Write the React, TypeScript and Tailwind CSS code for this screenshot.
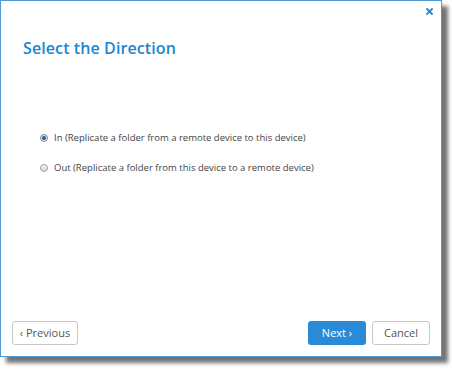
export default function App() {
  return (
    <div className="w-[452px] h-[374px] bg-white font-['Open_Sans',sans-serif]">
      <div className="w-[442px] h-[357px] border border-[#4e98d6] bg-white shadow-[6px_6px_4px_rgba(0,0,0,0.55)] flex flex-col">
        <div className="flex justify-end pt-[7px] pr-[8px] h-[18px]">
          <svg width="7" height="7" viewBox="0 0 7 7">
            <path d="M1 1L6 6M6 1L1 6" stroke="#1e88d2" strokeWidth="1.8" strokeLinecap="square" />
          </svg>
        </div>
        <h1 className="mt-[18px] pl-[22px] text-[16px] leading-[22px] font-semibold tracking-[0.1px] text-[#1b86cf]">Select the Direction</h1>

        <div className="mt-[72px] pl-[39px] flex flex-col gap-[16px] text-[9.5px] leading-[14px] text-[#444]">
          <label className="flex items-center gap-[6px]">
            <span className="w-[8px] h-[8px] rounded-full border border-[#8a8a8a] bg-[#e6e6e6] flex items-center justify-center">
              <span className="w-[4px] h-[4px] rounded-full bg-[#1a5fa8]" />
            </span>
            In (Replicate a folder from a remote device to this device)
          </label>
          <label className="flex items-center gap-[6px]">
            <span className="w-[8px] h-[8px] rounded-full border border-[#a0a0a0] bg-gradient-to-b from-[#f4f4f4] to-[#d8d8d8]" />
            Out (Replicate a folder from this device to a remote device)
          </label>
        </div>

        <div className="flex-1" />

        <div className="flex items-center px-[11px] pb-[11px] text-[11px]">
          <button className="h-[24px] w-[66px] rounded-[3px] border border-[#c8c8c8] bg-white text-[#555]">
            ‹ Previous
          </button>
          <div className="flex-1" />
          <button className="h-[24px] w-[58px] rounded-[3px] bg-[#2b8ad6] text-white">
            Next ›
          </button>
          <button className="ml-[6px] h-[24px] w-[58px] rounded-[3px] border border-[#c8c8c8] bg-white text-[#555]">
            Cancel
          </button>
        </div>
      </div>
    </div>
  );
}
